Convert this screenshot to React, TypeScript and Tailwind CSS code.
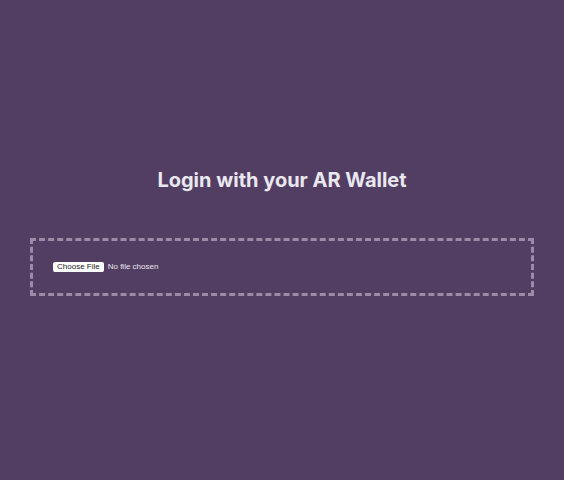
export default function App() {
  return (
    <div className="min-h-screen bg-[#533e63] flex flex-col items-center px-[30px] pt-[167px] font-['Inter',sans-serif]">
      <h1 className="text-[20px] leading-[26px] font-bold text-[#e9e7ef]">
        Login with your AR Wallet
      </h1>
      <div className="mt-[45px] w-full border-[3px] border-dashed border-[#9c8aa8] px-5 py-5">
        <input
          type="file"
          className="block h-3 text-[8px] leading-[12px] text-[#e9e7ef] font-['Liberation_Sans',sans-serif] file:bg-white file:text-[#222] file:border-0 file:rounded-[2px] file:px-1 file:py-0 file:h-[10px] file:leading-[10px] file:mr-1"
        />
      </div>
    </div>
  );
}
